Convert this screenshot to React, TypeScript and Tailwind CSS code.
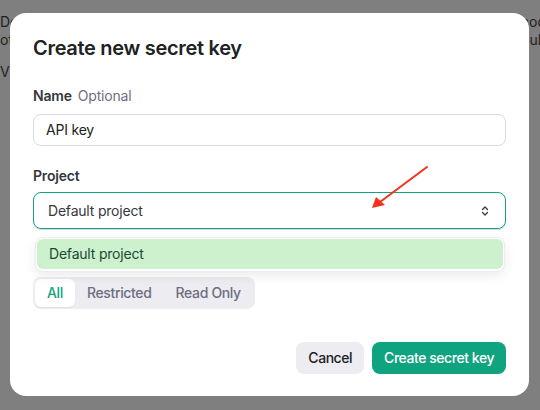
import React from 'react'

function UpDown() {
  return (
    <svg width="8" height="12" viewBox="0 0 8 12" fill="none" stroke="#353740" strokeWidth="1.3" strokeLinecap="round" strokeLinejoin="round">
      <path d="M1.5 4.5L4 2l2.5 2.5" />
      <path d="M1.5 7.5L4 10l2.5-2.5" />
    </svg>
  )
}

export default function App() {
  const font = { fontFamily: 'Inter, "Noto Sans", sans-serif' }
  return (
    <div className="relative w-[540px] h-[410px] overflow-hidden bg-[#7f7f7f]" style={font}>
      {/* page behind the overlay */}
      <div className="pt-[13px] text-[14px] leading-[18px] text-[#1f1f1f]">
        <div className="grid grid-cols-[521px_19px] whitespace-nowrap">
          <span>Do not</span>
          <span className="overflow-hidden">cod</span>
        </div>
        <div className="grid grid-cols-[521px_19px] whitespace-nowrap">
          <span>other</span>
          <span className="overflow-hidden">pub</span>
        </div>
        <div className="mt-[14px] whitespace-nowrap">View</div>
      </div>

      {/* modal */}
      <div className="absolute left-[10px] top-[13px] w-[519px] rounded-[16px] bg-white px-[23px] pt-[21px] pb-[22px] text-[#202123] tracking-[-0.2px]">
        <h2 className="text-[20px] leading-7 font-semibold tracking-[-0.3px]">Create new secret key</h2>

        <div className="mt-6 text-sm leading-5">
          <span className="font-semibold text-[#353740]">Name</span>
          <span className="ml-1.5 text-[#6e6e80]">Optional</span>
        </div>
        <div className="mt-2 h-8 rounded-lg border border-[#d9d9e3] px-3 flex items-center text-sm text-[#202123]">API key</div>

        <div className="mt-5 text-sm leading-5 font-semibold text-[#353740]">Project</div>
        <div className="relative mt-1.5">
          <div className="h-[37px] rounded-lg border border-[#10a37f] shadow-[0_1px_0_#d9d9e3] px-[14px] flex items-center justify-between text-sm text-[#353740]">
            <span>Default project</span>
            <span className="mr-[2px]"><UpDown /></span>
          </div>
          <div className="absolute left-[2px] right-px top-[45px] z-10 h-[35px] rounded-lg border border-[#ececf1] bg-white p-[1px] shadow-[0_4px_12px_rgba(0,0,0,0.08)]">
            <div className="h-[30px] rounded-md bg-[#cdf0cd] px-3 flex items-center text-sm text-[#1a4a35]">Default project</div>
          </div>
        </div>

        <div className="mt-12 inline-flex h-8 items-center rounded-lg bg-[#ececf1] p-0.5 text-sm font-medium tracking-[-0.35px]">
          <span className="h-7 px-3 flex items-center rounded-md bg-white text-[#10a37f] shadow-[0_1px_1px_rgba(0,0,0,0.06)]">All</span>
          <span className="h-7 px-3 flex items-center text-[#6e6e80]">Restricted</span>
          <span className="h-7 px-3 flex items-center text-[#6e6e80]">Read Only</span>
        </div>

        <div className="mt-[33px] flex justify-end gap-2 tracking-[-0.45px]">
          <button className="h-8 px-3 rounded-lg bg-[#ececf1] text-sm font-medium text-[#202123]">Cancel</button>
          <button className="h-8 px-3 rounded-lg bg-[#10a37f] text-sm font-medium text-white">Create secret key</button>
        </div>
      </div>

      {/* annotation arrow */}
      <svg className="absolute left-0 top-0 pointer-events-none" width="540" height="410">
        <line x1="427" y1="167" x2="380" y2="202" stroke="#f4321c" strokeWidth="2" strokeLinecap="round" />
        <path d="M372 208 L376 197 L385 205 Z" fill="#f4321c" />
      </svg>
    </div>
  )
}
